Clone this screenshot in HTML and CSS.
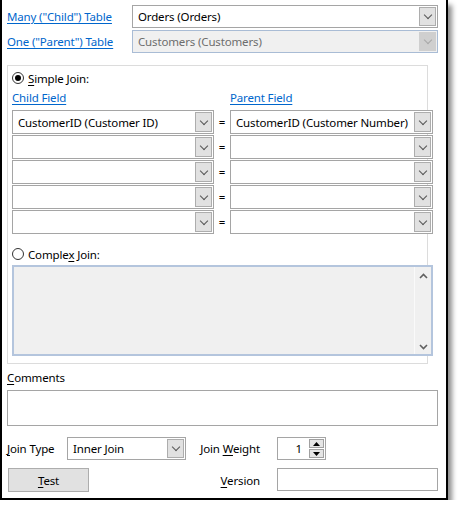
FILE: index.html
```html
<!DOCTYPE html>
<html lang="en">
<head>
    <meta charset="UTF-8">
    <title>Relationship</title>
    <link rel="stylesheet" href="styles.css">
</head>
<body>
<div class="window">
    <div class="top-row">
        <a href="#" class="link">Many ("Child") Table</a>
        <div class="combo"><span class="combo-text">Orders (Orders)</span><span class="drop"><i class="chev"></i></span></div>
    </div>
    <div class="top-row second">
        <a href="#" class="link">One ("Parent") Table</a>
        <div class="combo disabled"><span class="combo-text">Customers (Customers)</span><span class="drop"><i class="chev"></i></span></div>
    </div>

    <div class="group">
        <label class="radio-line"><span class="radio checked"></span><span><u>S</u>imple Join:</span></label>
        <div class="field-heads">
            <a href="#" class="link">Child Field</a>
            <span></span>
            <a href="#" class="link">Parent Field</a>
        </div>
        <div class="join-rows">
            <div class="combo"><span class="combo-text">CustomerID (Customer ID)</span><span class="drop"><i class="chev"></i></span></div>
            <span class="eq">=</span>
            <div class="combo"><span class="combo-text">CustomerID (Customer Number)</span><span class="drop"><i class="chev"></i></span></div>

            <div class="combo"><span class="combo-text"></span><span class="drop"><i class="chev"></i></span></div>
            <span class="eq">=</span>
            <div class="combo"><span class="combo-text"></span><span class="drop"><i class="chev"></i></span></div>

            <div class="combo"><span class="combo-text"></span><span class="drop"><i class="chev"></i></span></div>
            <span class="eq">=</span>
            <div class="combo"><span class="combo-text"></span><span class="drop"><i class="chev"></i></span></div>

            <div class="combo"><span class="combo-text"></span><span class="drop"><i class="chev"></i></span></div>
            <span class="eq">=</span>
            <div class="combo"><span class="combo-text"></span><span class="drop"><i class="chev"></i></span></div>

            <div class="combo"><span class="combo-text"></span><span class="drop"><i class="chev"></i></span></div>
            <span class="eq">=</span>
            <div class="combo"><span class="combo-text"></span><span class="drop"><i class="chev"></i></span></div>
        </div>
        <label class="radio-line complex"><span class="radio"></span><span>Comple<u>x</u> Join:</span></label>
        <div class="complex-box">
            <div class="scroll">
                <svg width="9" height="6" viewBox="0 0 9 6"><path d="M1 5 L4.5 1.5 L8 5" fill="none" stroke="#606060" stroke-width="1.6"/></svg>
                <svg width="9" height="6" viewBox="0 0 9 6"><path d="M1 1 L4.5 4.5 L8 1" fill="none" stroke="#606060" stroke-width="1.6"/></svg>
            </div>
        </div>
    </div>

    <div class="comments-label"><u>C</u>omments</div>
    <div class="comments-box"></div>

    <div class="bottom">
        <span class="lbl"><u>J</u>oin Type</span>
        <div class="combo"><span class="combo-text">Inner Join</span><span class="drop"><i class="chev"></i></span></div>
        <span class="lbl right">Join <u>W</u>eight</span>
        <div class="spin">
            <span class="spin-val">1</span>
            <span class="spin-btns">
                <span class="spin-btn"><svg width="7" height="4" viewBox="0 0 7 4"><path d="M0 4 L3.5 0 L7 4Z" fill="#000"/></svg></span>
                <span class="spin-btn"><svg width="7" height="4" viewBox="0 0 7 4"><path d="M0 0 L3.5 4 L7 0Z" fill="#000"/></svg></span>
            </span>
        </div>

        <button class="test-btn"><u>T</u>est</button>
        <span class="lbl right version"><u>V</u>ersion</span>
        <div class="version-box"></div>
    </div>
</div>
</body>
</html>
```

FILE: styles.css
```css
body{
    margin: 0;
    background: #fff;
    font-family: "Noto Sans", "Open Sans", sans-serif;
    font-size: 11.5px;
    letter-spacing: -0.15px;
    color: #000;
}
u{
    text-decoration: underline;
    text-underline-offset: 2px;
}
.window{
    width: 431px;
    padding: 5px 8px 6px 5px;
    border-left: 2px solid #000;
    border-right: 2px solid #000;
    border-bottom: 2px solid #000;
    box-shadow: 4px 5px 5px rgba(0, 0, 0, 0.45);
    background: #fff;
}
.link{
    color: #0066cc;
    text-decoration: underline;
    text-underline-offset: 2px;
    white-space: nowrap;
}
.top-row{
    display: grid;
    grid-template-columns: 125px 1fr;
    align-items: center;
    height: 23px;
}
.top-row.second{
    margin-top: 2px;
}

/* combo boxes */
.combo{
    display: flex;
    align-items: center;
    height: 23px;
    box-sizing: border-box;
    border: 1px solid #a5a5a5;
    background: #fff;
    padding: 1px;
}
.combo-text{
    flex: 1;
    padding-left: 4px;
    white-space: nowrap;
    overflow: hidden;
}
.drop{
    width: 17px;
    height: 19px;
    flex: none;
    box-sizing: border-box;
    border: 1px solid #adadad;
    background: #e1e1e1;
    display: flex;
    align-items: center;
    justify-content: center;
}
.chev{
    width: 5px;
    height: 5px;
    border-right: 1px solid #555;
    border-bottom: 1px solid #555;
    transform: rotate(45deg);
    margin-top: -3px;
}
.combo.disabled{
    background: #f0f0f0;
    border-color: #a9bcd5;
    color: #6d6d6d;
}
.combo.disabled .drop{
    background: #cfcfcf;
    border-color: #cfcfcf;
}
.combo.disabled .chev{
    border-color: #a8a8a8;
}

/* join group */
.group{
    width: 415px;
    margin-top: 12px;
    border: 1px solid #dcdcdc;
    padding: 5px 0 7px 4px;
}
.radio-line{
    display: flex;
    align-items: center;
    gap: 4px;
    height: 14px;
}
.radio{
    width: 10px;
    height: 10px;
    border: 1px solid #333;
    border-radius: 50%;
    display: flex;
    align-items: center;
    justify-content: center;
    background: #fff;
}
.radio.checked::after{
    content: "";
    width: 6px;
    height: 6px;
    border-radius: 50%;
    background: #000;
}
.field-heads{
    display: grid;
    grid-template-columns: 202px 16px 203px;
    height: 14px;
    line-height: 14px;
    margin-top: 6px;
}
.join-rows{
    display: grid;
    grid-template-columns: 202px 16px 203px;
    grid-auto-rows: 24px;
    row-gap: 1px;
    margin-top: 5px;
    width: 421px;
}
.join-rows .combo{
    height: 24px;
}
.join-rows .drop{
    height: 20px;
}
.eq{
    text-align: center;
    line-height: 24px;
}
.radio-line.complex{
    margin-top: 13px;
}
.complex-box{
    width: 421px;
    height: 91px;
    box-sizing: border-box;
    margin-top: 4px;
    border: 2px solid #b4c5dd;
    background: #f0f0f0;
    display: flex;
    justify-content: flex-end;
}
.scroll{
    width: 16px;
    border-left: 1px solid #fafafa;
    display: flex;
    flex-direction: column;
    justify-content: space-between;
    align-items: center;
    padding: 6px 0 4px;
}

/* comments */
.comments-label{
    margin-top: 7px;
    height: 14px;
    line-height: 14px;
}
.comments-box{
    margin-top: 5px;
    height: 36px;
    box-sizing: border-box;
    border: 1px solid #a5a5a5;
}

/* bottom fields */
.bottom{
    display: grid;
    grid-template-columns: 60px 119px 91px 161px;
    grid-template-rows: 23px 24px;
    row-gap: 8px;
    align-items: center;
    margin-top: 11px;
}
.lbl{
    white-space: nowrap;
}
.lbl.right{
    text-align: right;
    padding-right: 17px;
}
.spin{
    width: 49px;
    height: 23px;
    box-sizing: border-box;
    border: 1px solid #a5a5a5;
    display: flex;
    align-items: center;
    padding: 1px 1px 1px 0;
}
.spin-val{
    flex: 1;
    text-align: right;
    padding-right: 7px;
}
.spin-btns{
    display: flex;
    flex-direction: column;
    gap: 1px;
}
.spin-btn{
    width: 15px;
    height: 9px;
    box-sizing: border-box;
    border: 1px solid #a0a0a0;
    background: #e5e5e5;
    display: flex;
    align-items: center;
    justify-content: center;
}
.test-btn{
    grid-column: 1 / 3;
    justify-self: start;
    margin-left: 1px;
    width: 81px;
    height: 24px;
    border: 1px solid #adadad;
    background: #e1e1e1;
    font-family: inherit;
    font-size: inherit;
    letter-spacing: inherit;
    color: #000;
    padding: 0;
}
.version-box{
    height: 23px;
    box-sizing: border-box;
    border: 1px solid #a5a5a5;
    margin-top: -2px;
}
```
